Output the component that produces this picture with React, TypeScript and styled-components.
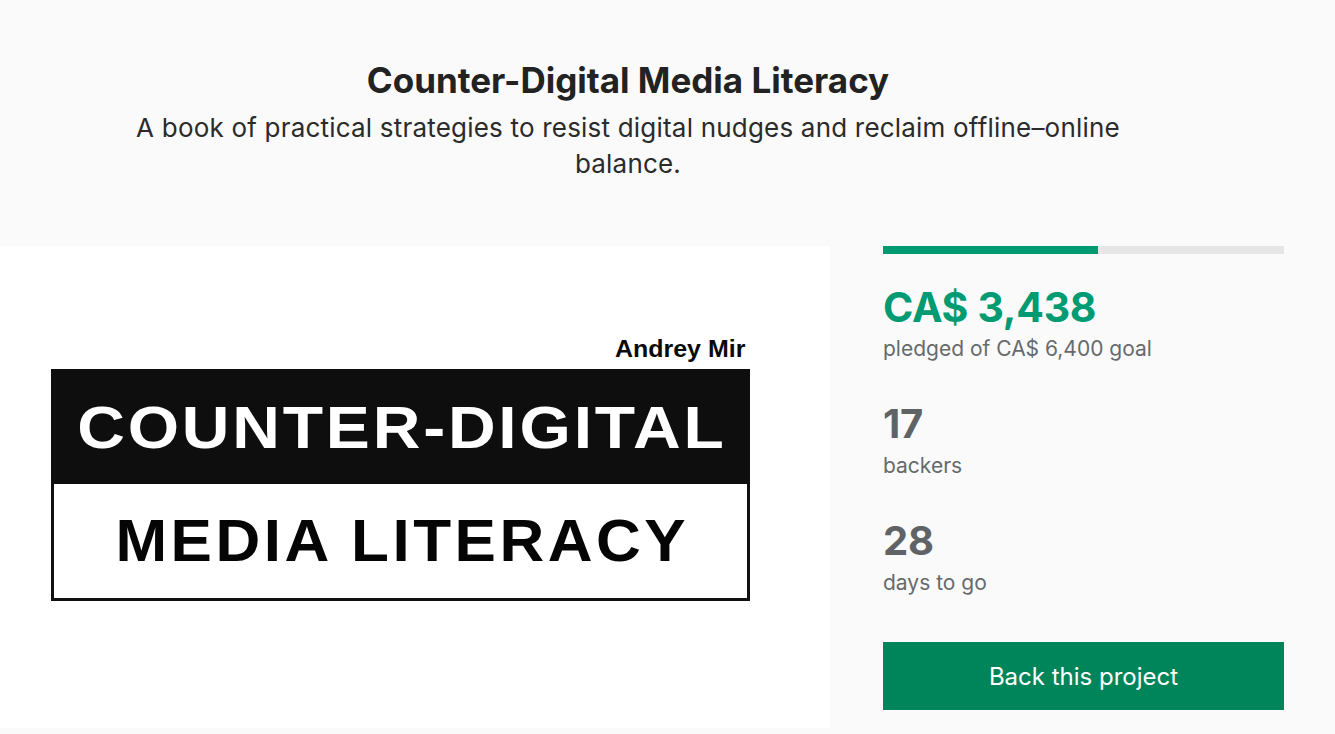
import styled, { createGlobalStyle } from "styled-components";

const GlobalStyle = createGlobalStyle`
  * {
    box-sizing: border-box;
  }
  body {
    margin: 0;
    background: #fafafa;
    font-family: Inter, "Noto Sans", sans-serif;
    color: #222;
  }
`;

const Page = styled.main`
  width: 1335px;
  height: 734px;
  padding-top: 60px;
  overflow: hidden;
`;

const Header = styled.header`
  width: 1256px;
  display: flex;
  flex-direction: column;
  align-items: center;
  text-align: center;
`;

const Title = styled.h1`
  margin: 0;
  font-size: 35px;
  line-height: 40px;
  font-weight: 700;
  color: #222;
`;

const Subtitle = styled.p`
  margin: 10px 0 0;
  max-width: 1000px;
  font-size: 26px;
  line-height: 36px;
  font-weight: 400;
  letter-spacing: 0.2px;
  color: #2b2b2b;
`;

const Content = styled.section`
  margin-top: 64px;
  display: flex;
  align-items: flex-start;
`;

const Media = styled.div`
  width: 830px;
  height: 482px;
  background: #fff;
  padding: 89px 0 0 51px;
`;

const Cover = styled.div`
  width: 699px;
  display: flex;
  flex-direction: column;
  font-family: "Liberation Sans", Arial, sans-serif;
  font-weight: 700;
`;

const Author = styled.div`
  align-self: flex-end;
  margin-right: 5px;
  font-size: 24px;
  line-height: 28px;
  color: #0a0a0a;
  transform: scaleX(1.04);
  transform-origin: right center;
`;

const CoverBand = styled.div<{ $dark?: boolean }>`
  display: flex;
  align-items: center;
  justify-content: center;
  height: ${({ $dark }) => ($dark ? "115px" : "117px")};
  margin-top: ${({ $dark }) => ($dark ? "6px" : "0")};
  background: ${({ $dark }) => ($dark ? "#0e0e0e" : "#fff")};
  color: ${({ $dark }) => ($dark ? "#fff" : "#050505")};
  border: ${({ $dark }) => ($dark ? "none" : "3px solid #111")};
  border-top: none;
`;

const CoverText = styled.span<{ $size: number; $spacing: number; $squash: number }>`
  display: inline-block;
  font-size: ${({ $size }) => $size}px;
  line-height: 1;
  letter-spacing: ${({ $spacing }) => $spacing}px;
  padding-left: ${({ $spacing }) => $spacing}px;
  transform: scaleY(${({ $squash }) => $squash});
`;

const Side = styled.aside`
  width: 401px;
  margin-left: 53px;
  display: flex;
  flex-direction: column;
`;

const Progress = styled.div`
  height: 8px;
  background: #e6e6e6;
`;

const ProgressFill = styled.div`
  height: 100%;
  background: #009a70;
`;

const Stat = styled.div<{ $first?: boolean }>`
  margin-top: ${({ $first }) => ($first ? "29px" : "37px")};
  display: flex;
  flex-direction: column;
`;

const StatValue = styled.div<{ $accent?: boolean }>`
  font-size: ${({ $accent }) => ($accent ? "41px" : "40px")};
  line-height: 48px;
  font-weight: 700;
  color: ${({ $accent }) => ($accent ? "#009b72" : "#5f6366")};
  letter-spacing: -0.3px;
`;

const StatLabel = styled.div`
  margin-top: 4px;
  font-size: 21px;
  line-height: 28px;
  color: #666a6d;
`;

const BackButton = styled.button`
  margin-top: 45px;
  height: 68px;
  width: 100%;
  border: none;
  border-radius: 0;
  background: #00855a;
  color: #fff;
  font-family: Inter, "Noto Sans", sans-serif;
  font-size: 24px;
  font-weight: 400;
  cursor: pointer;
`;

const pledged = 3438;
const goal = 6400;

export default function App() {
  const percent = Math.min(100, (pledged / goal) * 100);

  return (
    <>
      <GlobalStyle />
      <Page>
        <Header>
          <Title>Counter-Digital Media Literacy</Title>
          <Subtitle>
            A book of practical strategies to resist digital nudges and reclaim offline–online balance.
          </Subtitle>
        </Header>

        <Content>
          <Media>
            <Cover>
              <Author>Andrey Mir</Author>
              <CoverBand $dark>
                <CoverText $size={66} $spacing={2.8} $squash={0.9}>
                  COUNTER-DIGITAL
                </CoverText>
              </CoverBand>
              <CoverBand>
                <CoverText $size={62} $spacing={3.5} $squash={0.97}>
                  MEDIA LITERACY
                </CoverText>
              </CoverBand>
            </Cover>
          </Media>

          <Side>
            <Progress>
              <ProgressFill style={{ width: `${percent}%` }} />
            </Progress>
            <Stat $first>
              <StatValue $accent>CA$ 3,438</StatValue>
              <StatLabel>pledged of CA$ 6,400 goal</StatLabel>
            </Stat>
            <Stat>
              <StatValue>17</StatValue>
              <StatLabel>backers</StatLabel>
            </Stat>
            <Stat>
              <StatValue>28</StatValue>
              <StatLabel>days to go</StatLabel>
            </Stat>
            <BackButton>Back this project</BackButton>
          </Side>
        </Content>
      </Page>
    </>
  );
}
